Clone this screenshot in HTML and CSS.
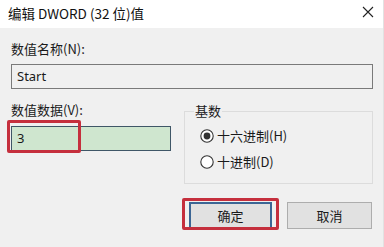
FILE: index.html
```html
<!DOCTYPE html>
<html lang="zh-CN">
<head>
<meta charset="utf-8">
<link rel="stylesheet" href="styles.css">
</head>
<body>
<div class="dialog">
  <div class="titlebar">
    <span class="title">编辑 DWORD (32 位)值</span>
    <svg class="close" width="12" height="12" viewBox="0 0 12 12"><path d="M1 1L11 11M11 1L1 11" stroke="#222" stroke-width="1.1" fill="none"/></svg>
  </div>
  <div class="content">
    <div class="label">数值名称(N):</div>
    <div class="textbox readonly">Start</div>
    <div class="row">
      <div class="leftcol">
        <div class="label">数值数据(V):</div>
        <div class="valuewrap">
          <div class="textbox value">3</div>
          <div class="mark mark-value"></div>
        </div>
      </div>
      <div class="group">
        <span class="legend">基数</span>
        <div class="radio">
          <svg width="14" height="14" viewBox="0 0 14 14"><circle cx="7" cy="7" r="6.2" fill="#fff" stroke="#333" stroke-width="1.1"/><circle cx="7" cy="7" r="3.4" fill="#333"/></svg>
          <span>十六进制(H)</span>
        </div>
        <div class="radio">
          <svg width="14" height="14" viewBox="0 0 14 14"><circle cx="7" cy="7" r="6.2" fill="#fff" stroke="#333" stroke-width="1.1"/></svg>
          <span>十进制(D)</span>
        </div>
      </div>
    </div>
    <div class="buttons">
      <div class="okwrap">
        <div class="btn ok">确定</div>
        <div class="mark mark-ok"></div>
      </div>
      <div class="btn">取消</div>
    </div>
  </div>
</div>
</body>
</html>
```
FILE: styles.css
```css
html, body {
  margin: 0;
  padding: 0;
}
body {
  width: 384px;
  height: 247px;
  overflow: hidden;
  background: #f0f0f0;
  font-family: "Noto Sans CJK SC", "Noto Sans", sans-serif;
  font-size: 13px;
  color: #1a1a1a;
}
.dialog {
  width: 384px;
  height: 247px;
  display: flex;
  flex-direction: column;
  border-right: 1px solid #e2e2e2;
  box-sizing: border-box;
}
.titlebar {
  height: 28px;
  background: #ffffff;
  display: flex;
  align-items: center;
  justify-content: space-between;
  padding: 0 9px 0 8px;
  box-sizing: border-box;
  flex: none;
}
.title {
  font-size: 13.5px;
  line-height: 18px;
  color: #111;
  margin-top: -2px;
}
.close {
  display: block;
  margin-top: -4px;
}
.content {
  padding: 13px 10px 0 11px;
  display: flex;
  flex-direction: column;
}
.label {
  line-height: 16px;
  height: 16px;
}
.textbox {
  box-sizing: border-box;
  height: 25px;
  border: 1px solid #7a7a7a;
  padding-left: 5px;
  line-height: 23px;
  font-family: "Noto Sans", "Noto Sans CJK SC", sans-serif;
  font-size: 13px;
}
.readonly {
  margin-top: 7px;
  background: #f0f0f0;
}
.row {
  display: flex;
  gap: 13px;
  margin-top: 13px;
}
.leftcol {
  width: 160px;
  display: flex;
  flex-direction: column;
}
.valuewrap {
  position: relative;
  margin-top: 8px;
}
.value {
  background: #cfe6cf;
  border-color: #3f5667;
}
.mark {
  position: absolute;
  border: 3px solid #c52f3d;
  border-radius: 2px;
  box-sizing: border-box;
}
.mark-value {
  left: -4px;
  top: -6px;
  width: 74px;
  height: 33px;
}
.group {
  width: 189px;
  height: 73px;
  margin-top: 9px;
  box-sizing: border-box;
  border: 1px solid #dcdcdc;
  display: flex;
  flex-direction: column;
  align-items: flex-start;
}
.legend {
  line-height: 16px;
  margin: -9px 0 0 9px;
  padding: 0 1px;
  background: #f0f0f0;
}
.radio {
  display: flex;
  align-items: center;
  gap: 3px;
  margin-left: 15px;
  height: 16px;
  line-height: 16px;
}
.radio:first-of-type {
  margin-top: 9px;
}
.radio + .radio {
  margin-top: 10px;
}
.radio svg {
  display: block;
}
.buttons {
  display: flex;
  justify-content: flex-end;
  gap: 15px;
  margin-top: 18px;
  padding-right: 1px;
}
.okwrap {
  position: relative;
}
.btn {
  box-sizing: border-box;
  width: 85px;
  height: 27px;
  background: #e1e1e1;
  border: 1px solid #adadad;
  display: flex;
  align-items: center;
  justify-content: center;
  line-height: 16px;
}
.ok {
  width: 83px;
  border: 2px solid #3b6594;
}
.mark-ok {
  left: -7px;
  top: -4px;
  width: 97px;
  height: 32px;
}
```
